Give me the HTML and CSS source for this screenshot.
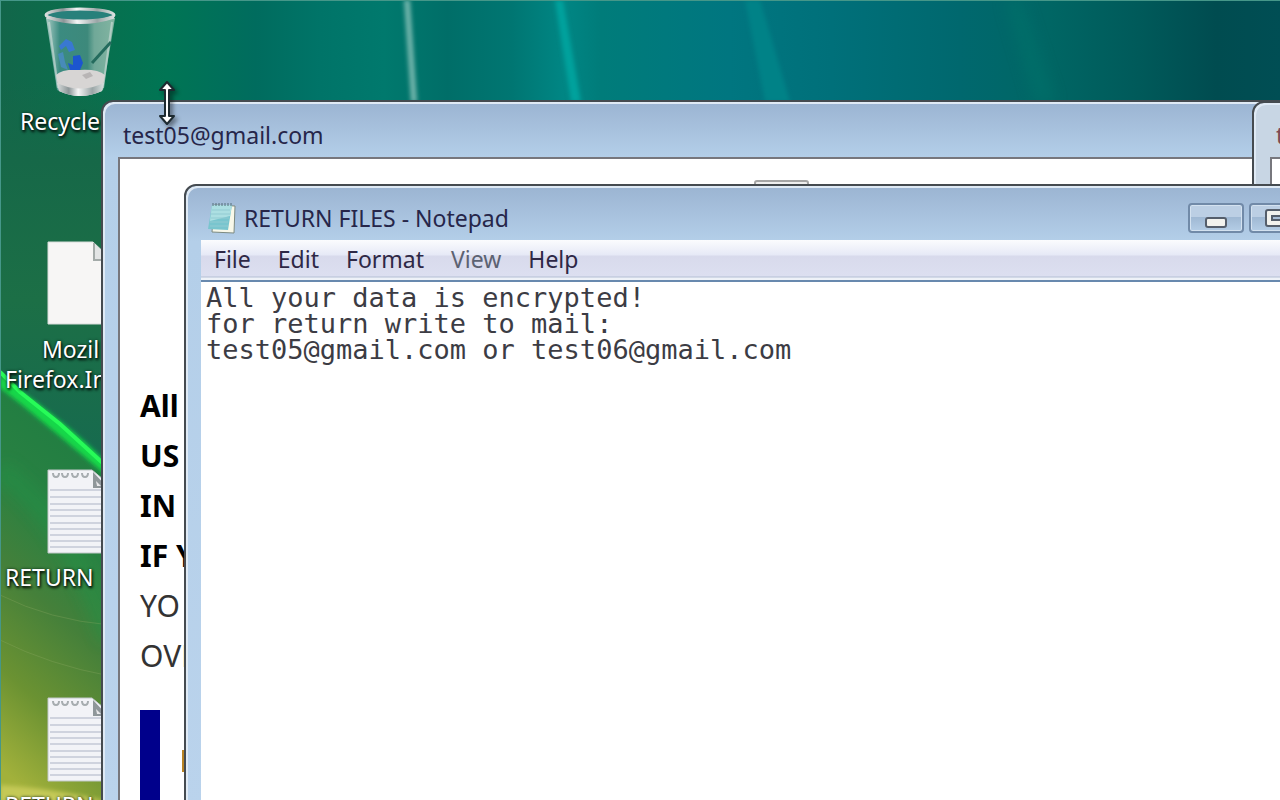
FILE: index.html
```html
<!DOCTYPE html>
<html lang="en">
<head>
<meta charset="utf-8">
<title>Desktop</title>
<link rel="stylesheet" href="styles.css">
</head>
<body>
<main class="desktop">
  <svg class="wallpaper" viewBox="0 0 1280 800" preserveAspectRatio="xMinYMin slice" aria-hidden="true">
    <defs>
      <linearGradient id="sky">
        <stop offset="0" stop-color="#12664a"/><stop offset=".06" stop-color="#0a6e4c"/><stop offset=".13" stop-color="#007554"/>
        <stop offset=".2" stop-color="#006c5e"/><stop offset=".25" stop-color="#007468"/><stop offset=".3" stop-color="#00796d"/>
        <stop offset=".35" stop-color="#006e68"/><stop offset=".4" stop-color="#007672"/><stop offset=".44" stop-color="#008684"/>
        <stop offset=".47" stop-color="#007c7a"/><stop offset=".57" stop-color="#007680"/><stop offset=".65" stop-color="#00707a"/>
        <stop offset=".75" stop-color="#00686e"/><stop offset=".82" stop-color="#006664"/><stop offset=".89" stop-color="#005a5a"/>
        <stop offset=".95" stop-color="#004c50"/><stop offset="1" stop-color="#004e54"/>
      </linearGradient>
      <linearGradient id="hill" x1="0" y1="0" x2="0" y2="1">
        <stop offset="0" stop-color="#166848" stop-opacity="0"/><stop offset=".2" stop-color="#166848"/><stop offset=".55" stop-color="#1c6f46"/>
        <stop offset="1" stop-color="#166a50"/>
      </linearGradient>
      <linearGradient id="grass" x1=".55" y1="0" x2=".3" y2="1">
        <stop offset="0" stop-color="#1c7c42"/><stop offset=".35" stop-color="#2a8142"/><stop offset=".55" stop-color="#45803a"/>
        <stop offset=".78" stop-color="#6b9232"/><stop offset="1" stop-color="#a2b13b"/>
      </linearGradient>
      <filter id="soft" x="-50%" y="-20%" width="200%" height="140%"><feGaussianBlur stdDeviation="2"/></filter>
      <filter id="mist" x="-50%" y="-20%" width="200%" height="140%"><feGaussianBlur stdDeviation="7"/></filter>
    </defs>
    <rect width="1280" height="800" fill="url(#sky)"/>
    <path d="M0 80H120V480H0Z" fill="url(#hill)"/>
    <path d="M0 372L120 482V800H0Z" fill="url(#grass)"/>
    <path d="M0 470Q70 520 110 640" fill="none" stroke="#229447" stroke-width="22" opacity=".4" filter="url(#mist)"/>
    <path d="M0 375C30 398 70 425 110 466V478C70 445 25 406 0 388Z" fill="#12d84a" filter="url(#soft)"/>
    <path d="M0 372L20 392L60 424L106 466" fill="none" stroke="#27fb58" stroke-width="4"/>
    <path d="M0 595Q50 620 110 625M0 640Q50 665 110 676" fill="none" stroke="#92ad67" stroke-width="1" opacity=".3"/>
    <path d="M0 785Q50 788 110 802H0Z" fill="#c4c957" filter="url(#soft)"/>
    <path d="M404 0H410L417 102H411Z" fill="#72b5ac" filter="url(#soft)"/>
    <path d="M555 0H563L581 102H571Z" fill="#00a29d" filter="url(#soft)"/>
    <path d="M745 0H760L790 102H765Z" fill="#008287" filter="url(#soft)"/>
    <path d="M1005 0H1022L1055 102H1035Z" fill="#00756c" opacity=".5" filter="url(#mist)"/>
    <path d="M0 .5H1280M.5 0V800" stroke="#459789" stroke-width="1"/>
  </svg>

  <ul class="icons">
    <li class="icon">
      <svg class="glyph" width="80" height="98" viewBox="40 4 80 98" aria-hidden="true">
        <defs>
          <linearGradient id="glass"><stop offset="0" stop-color="#a9cbc4"/><stop offset=".2" stop-color="#3b8b80"/><stop offset=".6" stop-color="#3d897b"/><stop offset=".7" stop-color="#70a898"/><stop offset="1" stop-color="#83b5a2"/></linearGradient>
          <linearGradient id="rim"><stop offset="0" stop-color="#d9dddd"/><stop offset=".25" stop-color="#8c9698"/><stop offset=".45" stop-color="#f5f5f5"/><stop offset=".75" stop-color="#9aa5a6"/><stop offset="1" stop-color="#d9e0df"/></linearGradient>
        </defs>
        <path d="M46 18L57 90Q80 102 103 90L115 18Z" fill="url(#glass)"/>
        <path d="M49 22L58 88M112 22L103 88" stroke="#c4d8d2" stroke-width="2" opacity=".7"/>
        <path d="M111 42L92 63" stroke="#246b5d" stroke-width="3"/>
        <path d="M56 75Q62 69 80 70Q98 69 105 75L102 91Q80 101 59 91Z" fill="#d7d5d4"/>
        <path d="M57 83Q80 94 104 83L102 91Q80 101 59 91Z" fill="url(#rim)"/>
        <path d="M82 75L90 72L93 76L86 79Z" fill="#b8b5b5"/>
        <path d="M59 46L66 39L72 42L75 50L69 52L66 46L61 50Z" fill="#3978d1"/>
        <path d="M73 56L80 55L83 63L80 70H70L68 63L73 65Z" fill="#1c55cf"/>
        <path d="M58 54L63 52L65 62L68 70L61 67Z" fill="#478bb9"/>
        <ellipse cx="80" cy="15" rx="34" ry="6" fill="#28807b" stroke="url(#rim)" stroke-width="3"/>
        <path d="M47 17Q80 28 114 17" fill="none" stroke="url(#rim)" stroke-width="3"/>
      </svg>
      <span class="label label-bin">Recycle</span>
    </li>
    <li class="icon">
      <svg class="glyph" width="80" height="98" viewBox="40 232 80 98" aria-hidden="true">
        <path d="M48 242H93L110 258V324H48Z" fill="#f7f6f5" stroke="#d8dcda"/>
        <path d="M94 243V260H110" fill="#e3e5e5" stroke="#a4aba9" stroke-width="2"/>
      </svg>
      <span class="label label-fox">Mozil</span>
      <span class="label">Firefox.In</span>
    </li>
    <li class="icon">
      <svg class="glyph" width="80" height="98" viewBox="40 460 80 98" aria-hidden="true">
        <g id="note">
          <path d="M48 470H92L110 485V553H48Z" fill="#f2f3f7" stroke="#c0c7c8"/>
          <path d="M50 490H110M50 497H110M50 504H110M50 510H110M50 516H110M50 523H110M50 529H110M50 535H110M50 541H110M50 547H110" stroke="#cfd3de" stroke-width="2"/>
          <path d="M53 473q0 4 3 4t3-4M62 473q0 4 3 4t3-4M72 473q0 4 3 4t3-4M82 473q0 4 3 4t3-4" fill="none" stroke="#a7adb0" stroke-width="2"/>
          <path d="M93 472V488H108Z" fill="#8f979a"/><path d="M96 481L101 486H97Z" fill="#e8e8ea"/>
        </g>
      </svg>
      <span class="label">RETURN</span>
    </li>
    <li class="icon">
      <svg class="glyph" width="80" height="98" viewBox="40 460 80 98" aria-hidden="true"><use href="#note"/></svg>
      <span class="label">RETURN</span>
    </li>
  </ul>

  <section class="window mail">
    <h2 class="title">test05@gmail.com</h2>
    <div class="page">
      <div class="stub"></div>
      <div class="lines">
        <p class="strong">All</p>
        <p class="strong">US</p>
        <p class="strong">IN</p>
        <p class="strong">IF Y</p>
        <p>YO</p>
        <p>OV<span class="red">E</span></p>
      </div>
      <div class="quote"><i class="speck"></i></div>
    </div>
  </section>

  <section class="window side">
    <h2 class="title">t</h2>
    <div class="page"></div>
  </section>

  <section class="window notepad">
    <header class="bar">
      <svg class="app" width="28" height="32" viewBox="0 0 28 32" aria-hidden="true">
        <path d="M6 3L27 4L26 31L4 30Z" fill="#f8f8e9" stroke="#7c8a81"/>
        <path d="M4 3H24L20 28L0 27Z" fill="#79c5ce"/>
        <path d="M4 3H24L22 14L2 19Z" fill="#acdfe2"/>
        <path d="M4 8H22M3 12H22M3 16H21M2 20H20M2 24H20" stroke="#92cbd2"/>
        <path d="M5 4V1M8 4V1M11 4V1M14 4V1M17 4V1M20 4V1M23 4V1" stroke="#526e78"/>
      </svg>
      <h1 class="title">RETURN FILES - Notepad</h1>
      <div class="controls">
        <button class="ctl" type="button" aria-label="Minimize">
          <svg width="24" height="14" viewBox="0 0 24 14"><rect x="2" y="3" width="20" height="9" rx="2" fill="#f2f2ee" stroke="#555e6b" stroke-width="2"/></svg>
        </button>
        <button class="ctl" type="button" aria-label="Maximize">
          <svg width="26" height="20" viewBox="0 0 26 20"><rect x="2" y="2" width="22" height="16" rx="2" fill="#f2f2ee" stroke="#555e6b" stroke-width="2"/><rect x="8" y="8" width="10" height="4" fill="#a9bed6" stroke="#555e6b" stroke-width="2"/></svg>
        </button>
      </div>
    </header>
    <nav class="menu">
      <button type="button">File</button>
      <button type="button">Edit</button>
      <button type="button">Format</button>
      <button type="button" class="dim">View</button>
      <button type="button">Help</button>
    </nav>
    <textarea class="editor" aria-label="Text" spellcheck="false">All your data is encrypted!
for return write to mail:
test05@gmail.com or test06@gmail.com</textarea>
  </section>

  <svg class="cursor" width="24" height="48" viewBox="0 0 24 48" aria-hidden="true">
    <path d="M12 2L19 10H14V36H19L12 44L5 36H10V10H5Z" fill="#fff" stroke="#1d2a30" stroke-width="2" stroke-linejoin="round"/>
  </svg>
</main>
</body>
</html>
```

FILE: styles.css
```css
* { box-sizing: border-box; }

body {
  margin: 0;
  font-family: "Noto Sans", "Open Sans", sans-serif;
  color: #26264a;
}

h1, h2, p, ul { margin: 0; padding: 0; }

.desktop {
  position: relative;
  height: 100vh;
  overflow: hidden;
  background: #12664a;
}

.wallpaper {
  position: absolute;
  inset: 0;
  width: 100%;
  height: 100%;
}

.icons {
  position: absolute;
  top: 4px;
  left: 0;
  display: flex;
  flex-direction: column;
  list-style: none;
}

.icon {
  display: flex;
  flex-direction: column;
  height: 228px;
  padding-left: 5px;
}

.glyph {
  flex: none;
  margin-left: 35px;
  margin-bottom: 4px;
}

.label {
  color: #fff;
  font-size: 23px;
  line-height: 30px;
  white-space: nowrap;
  text-shadow: 1px 2px 3px #000, 0 0 3px #0a2a1c;
}

.label-bin { padding-left: 15px; }
.label-fox { padding-left: 37px; }

.window {
  position: absolute;
  bottom: -20px;
  display: flex;
  flex-direction: column;
  border: 2px solid #454b50;
  border-radius: 12px 12px 0 0;
  background: linear-gradient(#9bb4d2, #b4cfe9 56px, #bad3ec);
  box-shadow: inset 2px 2px 0 #dfeaf5;
}

.title {
  font-size: 23px;
  font-weight: 400;
  line-height: 32px;
  white-space: nowrap;
}

.page {
  flex: 1;
  border: solid #77777d;
  border-width: 2px 0 0 2px;
  background: #fff;
  overflow: hidden;
}

.mail {
  top: 100px;
  left: 101px;
  right: -40px;
  padding: 17px 0 0 15px;
}

.mail > .title {
  padding-left: 5px;
  margin-bottom: 6px;
}

.stub {
  width: 55px;
  height: 10px;
  margin: 21px 0 0 634px;
  border: 2px solid #a5a5a5;
  border-radius: 3px;
  background: #eee;
}

.lines {
  padding: 191px 0 0 20px;
  font-size: 30px;
  line-height: 50px;
  color: #333;
  white-space: nowrap;
}

.strong {
  font-weight: 700;
  color: #000;
}

.red { color: #a00; }

.quote {
  height: 120px;
  margin: 29px 0 0 20px;
  padding: 40px 0 0 20px;
  border-left: 20px solid #00008b;
}

.speck {
  display: block;
  width: 8px;
  height: 22px;
  margin-left: 2px;
  background: #b98322;
}

.side {
  top: 101px;
  left: 1252px;
  width: 500px;
  padding: 16px 0 0 16px;
  background: #c8d6e4;
}

.side > .title {
  padding-left: 6px;
  margin-bottom: 6px;
  color: #7c4a52;
}

.notepad {
  top: 184px;
  left: 184px;
  right: -35px;
  padding: 2px 0 0 15px;
}

.bar {
  display: flex;
  align-items: center;
  gap: 8px;
  height: 52px;
  padding: 8px 8px 0 7px;
}

.bar .title { flex: 1; }

.controls {
  display: flex;
  gap: 5px;
}

.ctl {
  display: grid;
  place-items: center;
  width: 56px;
  height: 30px;
  padding: 0;
  border: 2px solid #718aa8;
  border-radius: 4px;
  background: linear-gradient(#bccfe4 45%, #9fb8d3 46%, #b4cde6);
  box-shadow: inset 0 0 0 1px #d4e2f0;
}

.ctl:first-child svg { margin-top: 7px; }

.menu {
  display: flex;
  gap: 27px;
  height: 42px;
  padding: 0 13px;
  border-bottom: 2px solid #6889ae;
  background: linear-gradient(#fbfcfe, #e6e9f6 15px, #d8daec 16px, #dcdff0 36px, #b4bfd4 37px, #eef2f8 38px);
}

.menu button {
  padding: 0 0 2px;
  border: 0;
  background: none;
  color: #2e2846;
  font: 23px/36px "Noto Sans", "Open Sans", sans-serif;
}

.menu .dim { color: #5c6272; }

.editor {
  flex: 1;
  margin: 0;
  padding: 3px 5px;
  border: 0;
  outline: 0;
  resize: none;
  background: #fff;
  color: #3c3c44;
  font: 27px/26px "DejaVu Sans Mono", monospace;
}

.cursor {
  position: absolute;
  top: 80px;
  left: 155px;
  filter: drop-shadow(3px 3px 2px #0006);
}
```
